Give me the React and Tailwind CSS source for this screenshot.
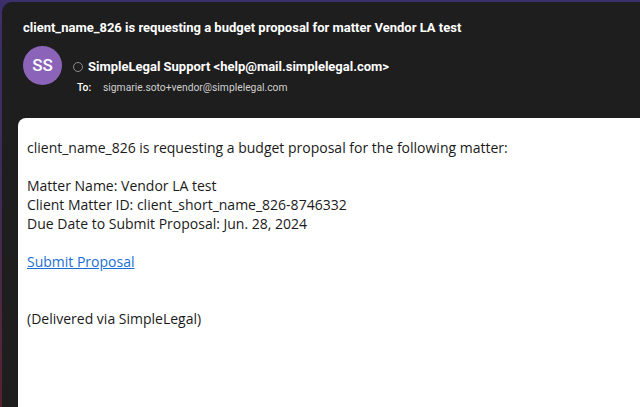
export default function App() {
  return (
    <div className="w-[640px] h-[407px] overflow-hidden bg-gradient-to-b from-[#3b2f6c] via-[#402a55] to-[#5a2030] pt-[2px] pl-[2px]">
      <div className="w-full h-full bg-[#1e1e1e] rounded-tl-[10px] flex flex-col" style={{ fontFamily: 'Roboto, "Liberation Sans", sans-serif' }}>
        <div className="pl-[21px] pt-[17px] text-white font-bold text-[13px] leading-[18px]">
          client_name_826 is requesting a budget proposal for matter Vendor LA test
        </div>
        <div className="flex items-start pl-[21px] pt-[9px]">
          <div className="w-[39px] h-[39px] rounded-full bg-[#8b63b9] flex items-center justify-center text-white text-[17px] font-medium">SS</div>
          <div className="ml-[11px] flex flex-col pt-[12px]">
            <div className="flex items-center text-white font-bold text-[13px] leading-[18px]">
              <span className="w-[10px] h-[10px] rounded-full border border-[#8a8a8a] mr-[5px]"></span>
              SimpleLegal Support &lt;help@mail.simplelegal.com&gt;
            </div>
            <div className="flex items-center mt-[5px] text-[10.3px] leading-[14px] ml-[4px]">
              <span className="text-white font-medium w-[26px]">To:</span>
              <span className="text-[#cfcfcf]">sigmarie.soto+vendor@simplelegal.com</span>
            </div>
          </div>
        </div>
        <div className="mt-[23px] ml-[16px] flex-1 bg-white rounded-tl-[8px] pl-[9px] pt-[20px] text-[#1a1a1a] text-[14px] leading-[19px]" style={{ fontFamily: '"Open Sans", "Noto Sans", sans-serif' }}>
          <p>client_name_826 is requesting a budget proposal for the following matter:</p>
          <p className="mt-[19px]">Matter Name: Vendor LA test</p>
          <p>Client Matter ID: client_short_name_826-8746332</p>
          <p>Due Date to Submit Proposal: Jun. 28, 2024</p>
          <p className="mt-[19px]"><a href="#" className="text-[#1a6fd6] underline">Submit Proposal</a></p>
          <p className="mt-[38px]">(Delivered via SimpleLegal)</p>
        </div>
      </div>
    </div>
  );
}
